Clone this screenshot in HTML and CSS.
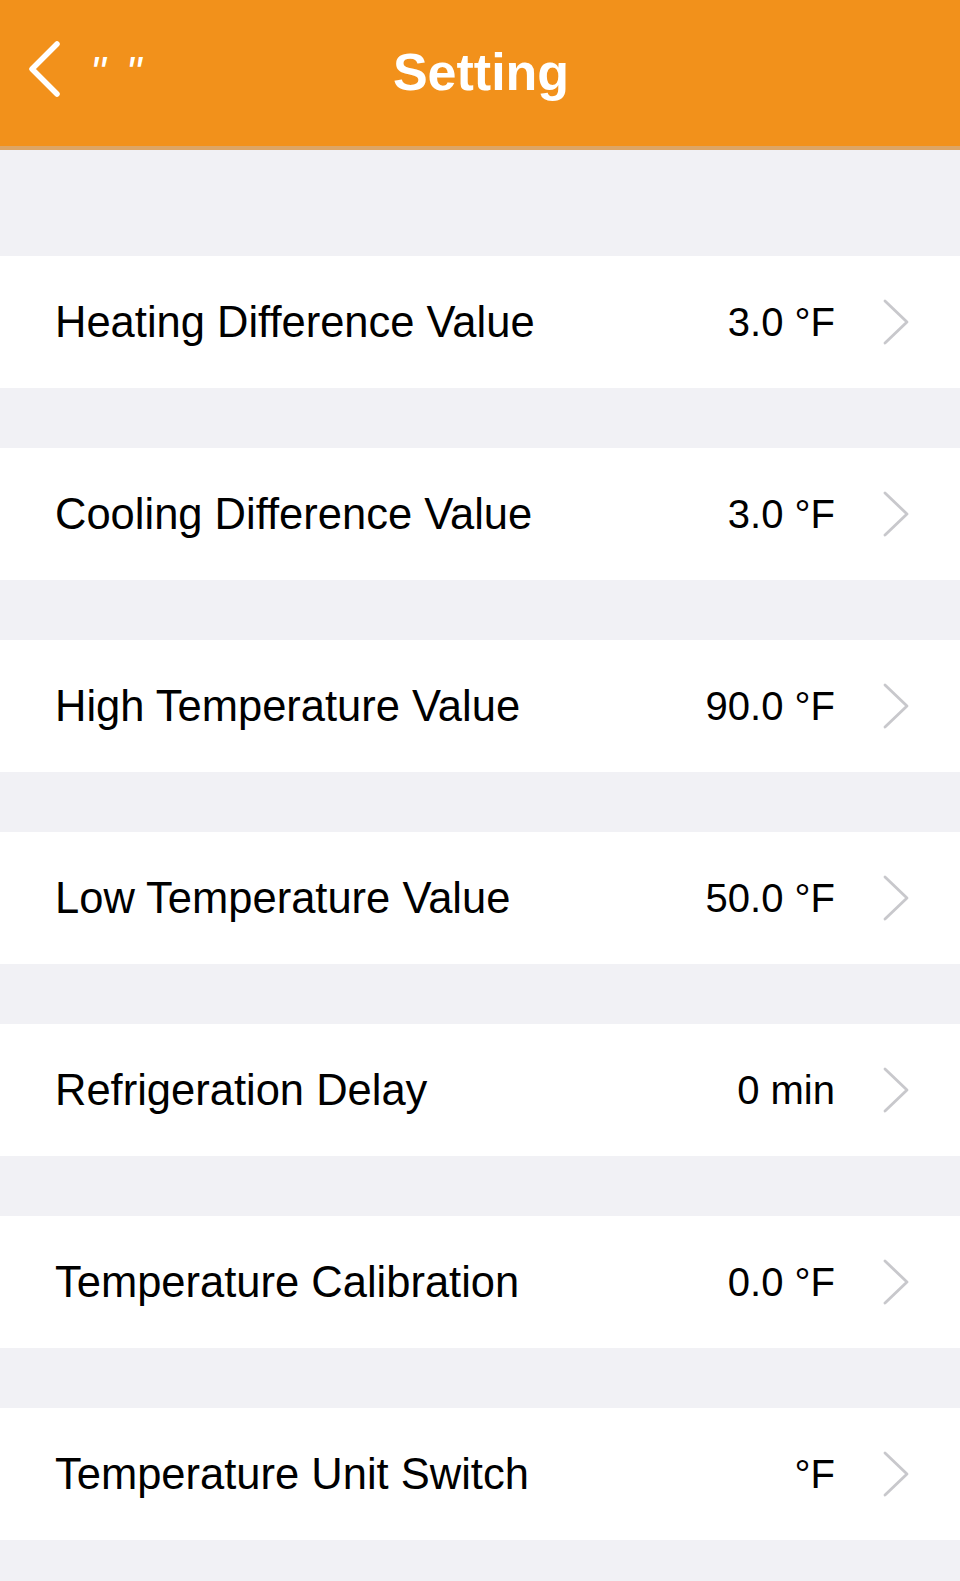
FILE: index.html
```html
<!DOCTYPE html>
<html>
<head>
<meta charset="utf-8">
<link rel="stylesheet" href="styles.css">
</head>
<body>
<header class="navbar">
  <div class="nav-left">
    <svg class="back" viewBox="0 0 36 58" width="36" height="58"><path d="M31 4 L6 29 L31 54" fill="none" stroke="#fff" stroke-width="5.5" stroke-linecap="round" stroke-linejoin="round"/></svg>
    <span class="back-text"><span>"</span><span>"</span></span>
  </div>
  <h1 class="title">Setting</h1>
</header>
<main class="list">
  <div class="row"><span class="label">Heating Difference Value</span><span class="value">3.0 °F</span><svg class="chev" viewBox="0 0 28 46" width="28" height="46"><path d="M3 2 L25 23 L3 44" fill="none" stroke="#c8c8cc" stroke-width="2.8" stroke-linecap="round" stroke-linejoin="round"/></svg></div>
  <div class="row"><span class="label">Cooling Difference Value</span><span class="value">3.0 °F</span><svg class="chev" viewBox="0 0 28 46" width="28" height="46"><path d="M3 2 L25 23 L3 44" fill="none" stroke="#c8c8cc" stroke-width="2.8" stroke-linecap="round" stroke-linejoin="round"/></svg></div>
  <div class="row"><span class="label">High Temperature Value</span><span class="value">90.0 °F</span><svg class="chev" viewBox="0 0 28 46" width="28" height="46"><path d="M3 2 L25 23 L3 44" fill="none" stroke="#c8c8cc" stroke-width="2.8" stroke-linecap="round" stroke-linejoin="round"/></svg></div>
  <div class="row"><span class="label">Low Temperature Value</span><span class="value">50.0 °F</span><svg class="chev" viewBox="0 0 28 46" width="28" height="46"><path d="M3 2 L25 23 L3 44" fill="none" stroke="#c8c8cc" stroke-width="2.8" stroke-linecap="round" stroke-linejoin="round"/></svg></div>
  <div class="row"><span class="label">Refrigeration Delay</span><span class="value">0 min</span><svg class="chev" viewBox="0 0 28 46" width="28" height="46"><path d="M3 2 L25 23 L3 44" fill="none" stroke="#c8c8cc" stroke-width="2.8" stroke-linecap="round" stroke-linejoin="round"/></svg></div>
  <div class="row"><span class="label">Temperature Calibration</span><span class="value">0.0 °F</span><svg class="chev" viewBox="0 0 28 46" width="28" height="46"><path d="M3 2 L25 23 L3 44" fill="none" stroke="#c8c8cc" stroke-width="2.8" stroke-linecap="round" stroke-linejoin="round"/></svg></div>
  <div class="row"><span class="label">Temperature Unit Switch</span><span class="value">°F</span><svg class="chev" viewBox="0 0 28 46" width="28" height="46"><path d="M3 2 L25 23 L3 44" fill="none" stroke="#c8c8cc" stroke-width="2.8" stroke-linecap="round" stroke-linejoin="round"/></svg></div>
</main>
</body>
</html>
```
FILE: styles.css
```css
html, body {
  margin: 0;
  padding: 0;
}
body {
  background: #f1f1f5;
  font-family: "Liberation Sans", Arial, sans-serif;
  color: #000;
  width: 960px;
  min-height: 1581px;
}
.navbar {
  height: 146px;
  background: #f2911b;
  border-bottom: 4px solid #dda565;
  display: flex;
  align-items: center;
  justify-content: center;
  position: relative;
}
.nav-left {
  position: absolute;
  left: 26px;
  top: 40px;
  display: flex;
  align-items: flex-start;
  gap: 28px;
}
.back {
  display: block;
}
.back-text {
  color: #fff;
  font-style: italic;
  font-size: 44px;
  line-height: 1;
  margin-top: 11px;
  display: flex;
  gap: 20px;
}
.title {
  margin: 0;
  color: #fff;
  font-size: 52px;
  font-weight: bold;
  margin-top: -2px;
  margin-left: 2px;
}
.list {
  padding-top: 106px;
  display: flex;
  flex-direction: column;
  gap: 60px;
}
.row {
  height: 132px;
  background: #fff;
  display: flex;
  align-items: center;
  padding: 0 50px 0 55px;
}
.label {
  flex: 1;
  font-size: 43.5px;
}
.value {
  font-size: 40px;
  margin-right: 47px;
}
.chev {
  display: block;
}
```
